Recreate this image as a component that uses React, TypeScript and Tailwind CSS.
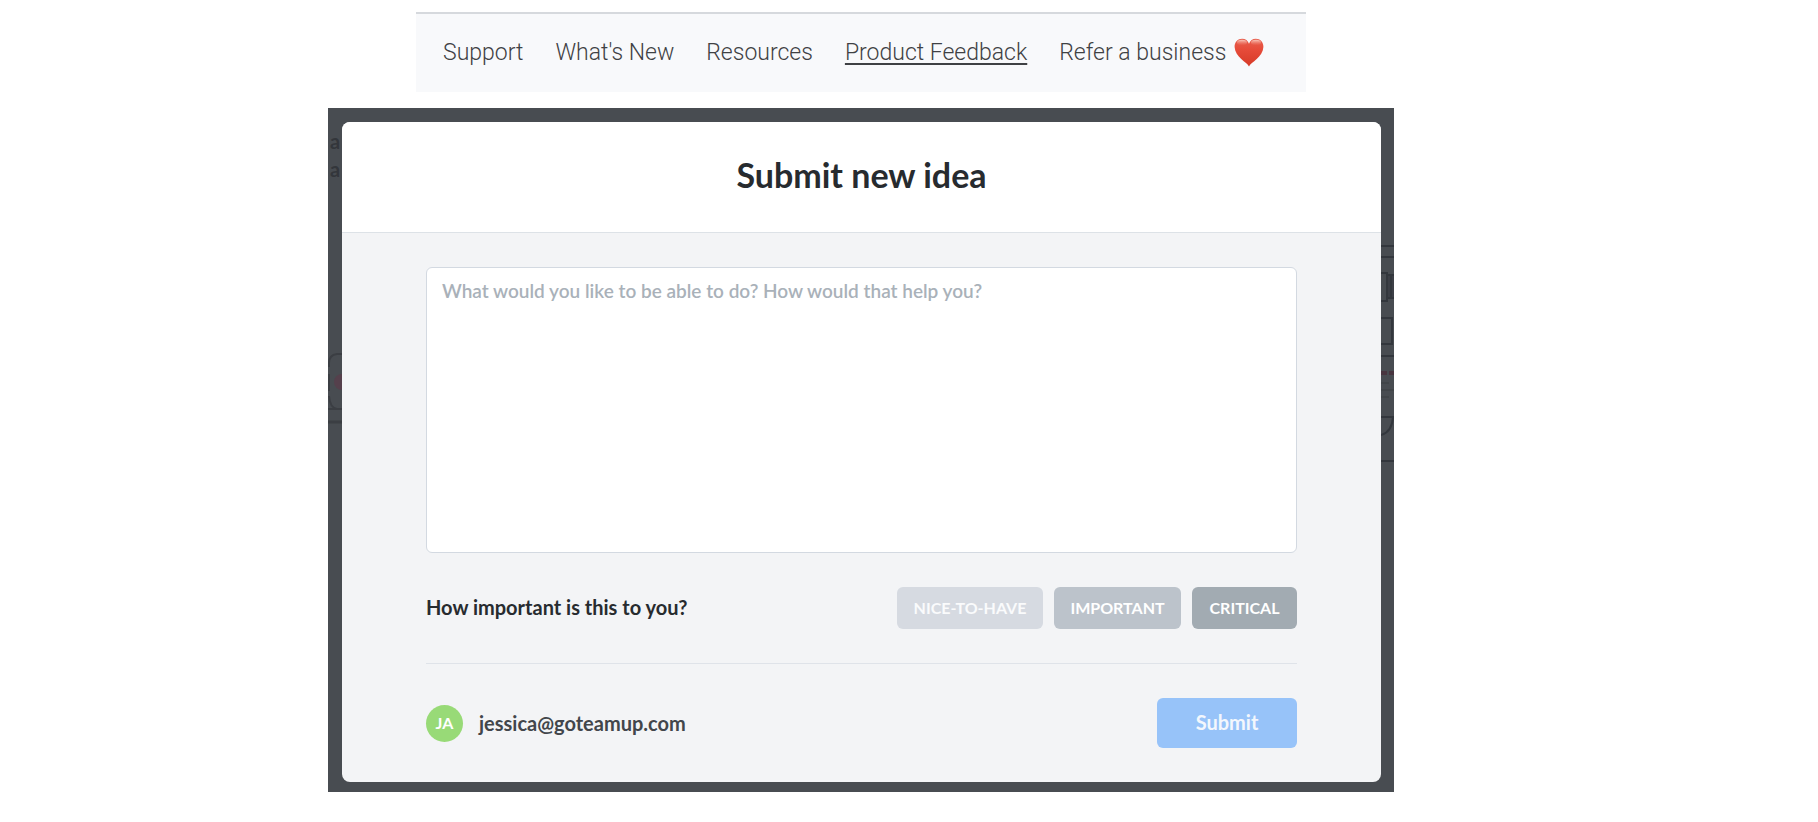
import React from "react";

const links = ["Support", "What's New", "Resources", "Product Feedback"];

function Heart() {
  return (
    <svg viewBox="0 0 30 29" className="mb-[2px] h-[29px] w-[30px]" aria-hidden="true">
      <defs>
        <linearGradient id="heart" x1="0" y1="0" x2="0" y2="1">
          <stop offset="0" stopColor="#e8604f" />
          <stop offset="0.4" stopColor="#e64b39" />
          <stop offset="1" stopColor="#d63a27" />
        </linearGradient>
        <linearGradient id="gloss" x1="0" y1="0" x2="0" y2="1">
          <stop offset="0" stopColor="#fbd3c8" stopOpacity="0.9" />
          <stop offset="1" stopColor="#f08a78" stopOpacity="0" />
        </linearGradient>
      </defs>
      <path
        d="M15 28.5C13.2 24.4 1 19.4 0.6 9.1C0.4 4 3.9 0.7 8.1 0.7C11.4 0.7 14 2.6 15 5.7C16 2.6 18.6 0.7 21.9 0.7C26.1 0.7 29.6 4 29.4 9.1C29 19.4 16.8 24.4 15 28.5Z"
        fill="url(#heart)"
      />
      <ellipse cx="8" cy="4.6" rx="5" ry="2.8" fill="url(#gloss)" />
      <ellipse cx="22" cy="4.6" rx="5" ry="2.8" fill="url(#gloss)" />
    </svg>
  );
}

function LeftBackdrop() {
  return (
    <div className="w-[14px] shrink-0 overflow-hidden pl-[2px] pt-[5px] text-xl leading-7 font-bold text-[#33363b]">
      <div>a</div>
      <div>a</div>
      <svg viewBox="0 0 14 90" className="-ml-[2px] mt-[168px] h-[90px] w-[14px]" aria-hidden="true">
        <g fill="none" stroke="#3b3e43" strokeWidth="2">
          <path d="M14 3H9Q1 4 1 12V16M1 23V40M1 45Q2 57 9 58H14M0 58H14" />
          <path d="M0 71H14" strokeWidth="3" />
        </g>
        <circle cx="14" cy="31" r="8" fill="#55404c" />
      </svg>
    </div>
  );
}

function RightBackdrop() {
  return (
    <div className="w-[13px] shrink-0 overflow-hidden">
      <svg viewBox="0 0 13 230" className="mt-[120px] h-[230px] w-[13px]" aria-hidden="true">
        <path d="M7 34H13V56H7Z" fill="#3c3f46" />
        <g fill="none" stroke="#33373d" strokeWidth="2">
          <path d="M0 4H13M0 15H13M0 31H6V59H0M6 33H13M6 56H13M10 33V56" />
          <path d="M0 76H11V102H0M0 114H13" />
          <path d="M0 175H12Q11 190 0 193M0 219H13" />
        </g>
        <path d="M0 131H6M8 131H13" stroke="#48353f" strokeWidth="4" />
        <path d="M0 141H8M0 148H13M0 155H8" stroke="#3b3e43" strokeWidth="1" />
      </svg>
    </div>
  );
}

export default function App() {
  return (
    <div className="flex flex-col items-center gap-4 bg-white pt-3 pr-24 pb-[30px] font-['Lato',sans-serif]">
      <nav className="flex h-20 w-full max-w-[890px] items-center gap-8 border-t-2 border-[#d6d9dd] bg-[#f8f9fb] px-[27px] font-['Roboto',sans-serif] text-[23px] leading-8 font-light whitespace-nowrap text-[#3f4144]">
        {links.map((label) => (
          <a
            key={label}
            href="#"
            className={label === "Product Feedback" ? "underline decoration-2 underline-offset-3" : ""}
          >
            {label}
          </a>
        ))}
        <a href="#" className="flex items-center gap-2">
          Refer a business <Heart />
        </a>
      </nav>

      <div className="flex w-full max-w-[1066px] bg-[#484c51] pt-[14px] pb-[10px]">
        <LeftBackdrop />
        <form className="min-w-0 grow overflow-hidden rounded-lg bg-[#f3f4f6]">
          <header className="border-b border-[#dde2e7] bg-white pt-[30px] pb-[35px] text-center">
            <h1 className="text-[34px] leading-[45px] font-bold text-[#272b2f]">Submit new idea</h1>
          </header>
          <div className="px-[84px] py-[34px]">
            <textarea
              aria-label="Your idea"
              placeholder="What would you like to be able to do? How would that help you?"
              className="block h-[286px] w-full resize-none rounded-md border border-[#d3d9e1] bg-white px-[15px] py-[9px] text-[19px] leading-7 font-semibold placeholder:text-[#a9b1b9]"
            />
            <div className="flex items-center justify-between border-b border-[#dfe3e9] py-[34px]">
              <h2 className="pb-[2px] text-[20px] leading-6 font-bold text-[#272b2f]">How important is this to you?</h2>
              <div className="flex gap-[11px] text-base leading-[42px] font-bold text-white">
                <button type="button" className="w-[146px] rounded-md bg-[#d6dae1] text-[#fafbfc]">NICE-TO-HAVE</button>
                <button type="button" className="w-[127px] rounded-md bg-[#bcc3cb]">IMPORTANT</button>
                <button type="button" className="w-[105px] rounded-md bg-[#a2abb2]">CRITICAL</button>
              </div>
            </div>
            <div className="flex items-center justify-between pt-[34px]">
              <div className="flex items-center gap-4">
                <span className="grid size-[37px] place-items-center rounded-full bg-[#98da77] text-base font-bold text-white">JA</span>
                <span className="text-[20px] leading-6 font-bold text-[#42464b]">jessica@goteamup.com</span>
              </div>
              <button type="submit" className="h-[50px] w-[140px] rounded-md bg-[#97c3f9] pb-[2px] text-[20px] font-bold text-[#f3f7fd]">Submit</button>
            </div>
          </div>
        </form>
        <RightBackdrop />
      </div>
    </div>
  );
}
